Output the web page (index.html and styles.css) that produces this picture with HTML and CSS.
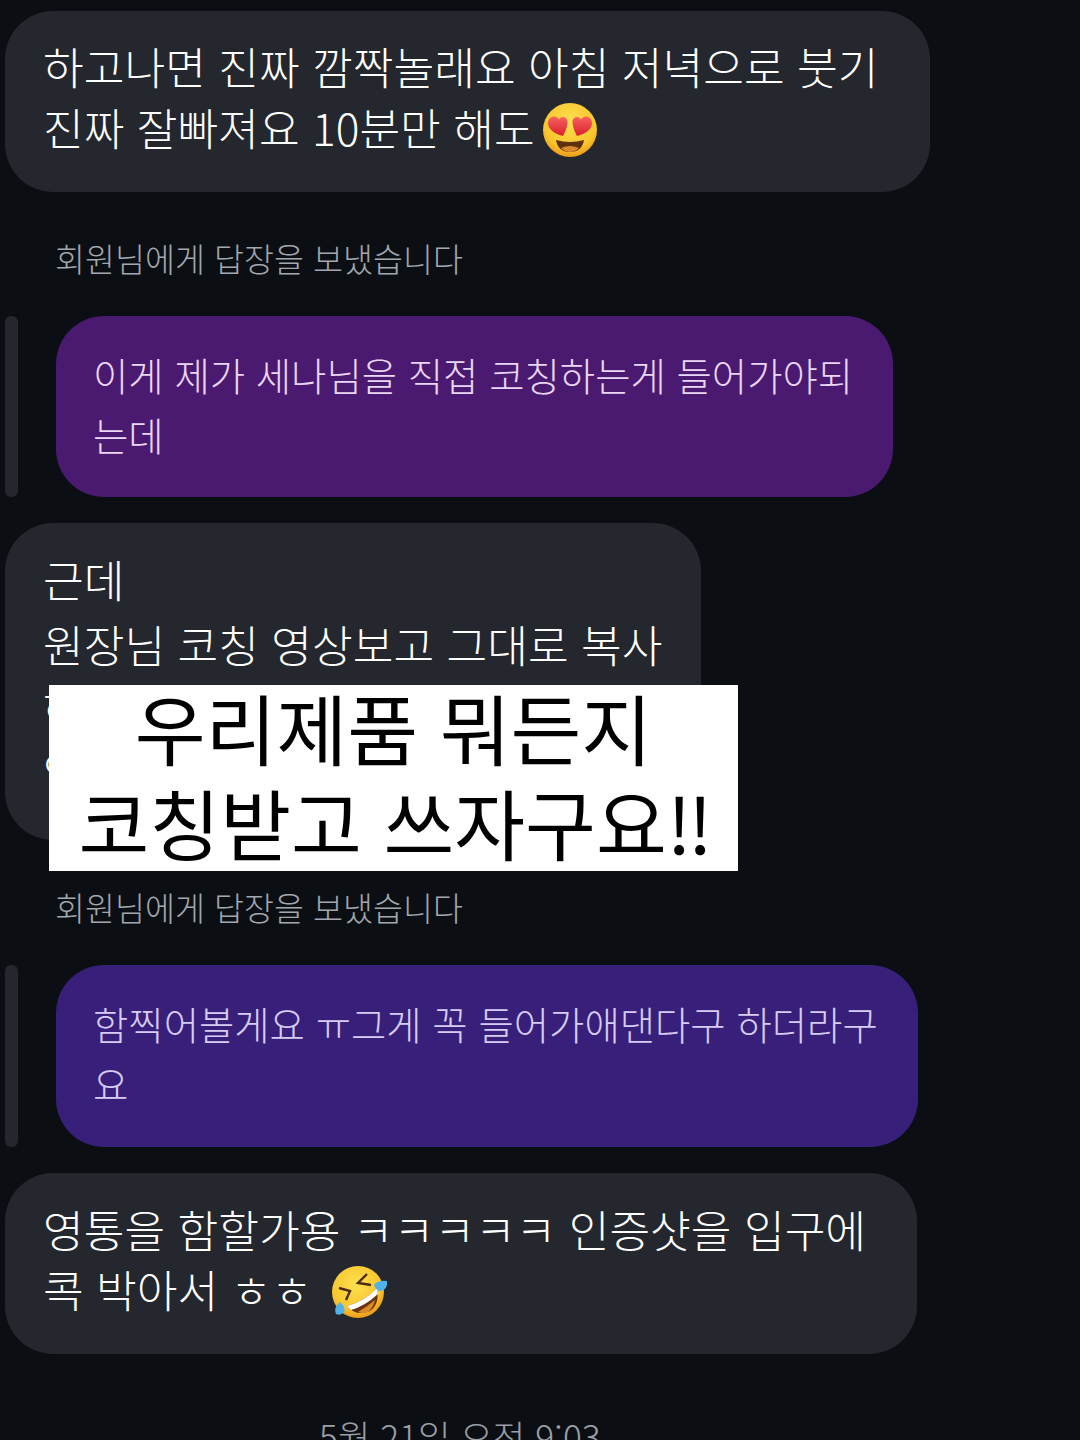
FILE: index.html
```html
<!DOCTYPE html>
<html lang="ko">
<head>
    <meta charset="UTF-8">
    <meta name="viewport" content="width=device-width, initial-scale=1.0">
    <title>메시지</title>
    <link rel="stylesheet" href="styles.css">
</head>
<body>

<div class="thread">
    <div class="bubble first">
        하고나면 진짜 깜짝놀래요 아침 저녁으로 붓기<br>
        진짜 잘빠져요 10분만 해도<svg class="emoji" viewBox="0 0 56 56">
            <defs>
                <radialGradient id="face-a" cx="0.5" cy="0.35" r="0.7">
                    <stop offset="0" stop-color="#fde04f"/>
                    <stop offset="0.7" stop-color="#f8c52c"/>
                    <stop offset="1" stop-color="#e98e17"/>
                </radialGradient>
                <linearGradient id="heart-a" x1="0" y1="0" x2="0" y2="1">
                    <stop offset="0" stop-color="#f8635f"/>
                    <stop offset="1" stop-color="#d81f2c"/>
                </linearGradient>
            </defs>
            <circle cx="28" cy="28" r="27" fill="url(#face-a)"/>
            <path d="M14 38 Q28 42 42 38 Q40 50 28 50 Q16 50 14 38Z" fill="#5e300e"/>
            <path d="M19 46 Q28 42 37 46 Q33 50 28 50 Q23 50 19 46Z" fill="#d98a2a"/>
            <path d="M21 34 C12 32 4 26 6.500 18.500 C8.500 13 15 13.500 17 17.500 C20 13 26 15 25.500 21 C25 26 23 30 21 34Z" fill="url(#heart-a)"/>
            <path d="M35 34 C44 32 52 26 49.500 18.500 C47.500 13 41 13.500 39 17.500 C36 13 30 15 30.500 21 C31 26 33 30 35 34Z" fill="url(#heart-a)"/>
        </svg>
    </div>

    <div class="reply-label">회원님에게 답장을 보냈습니다</div>

    <div class="reply-row">
        <div class="reply-bar"></div>
        <div class="bubble mine plum">
            이게 제가 세나님을 직접 코칭하는게 들어가야되<br>
            는데
        </div>
    </div>

    <div class="bubble coach-msg">
        <div class="short-line">근데</div>
        원장님 코칭 영상보고 그대로 복사<br>
        하<br>
        연
        <div class="caption">
            <div class="caption-text">우리제품 뭐든지<br>코칭받고 쓰자구요<span class="bangs">!!</span></div>
        </div>
    </div>

    <div class="reply-label second">회원님에게 답장을 보냈습니다</div>

    <div class="reply-row">
        <div class="reply-bar"></div>
        <div class="bubble mine indigo">
            함찍어볼게요 ㅠ그게 꼭 들어가애댄다구 하더라구<br>
            요
        </div>
    </div>

    <div class="bubble last">
        영통을 함할가용 ㅋㅋㅋㅋㅋ 인증샷을 입구에<br>
        콕 박아서 ㅎㅎ <svg class="emoji rofl" viewBox="0 0 60 60">
            <defs>
                <radialGradient id="face-b" cx="0.45" cy="0.35" r="0.7">
                    <stop offset="0" stop-color="#fde04f"/>
                    <stop offset="0.7" stop-color="#f8c52c"/>
                    <stop offset="1" stop-color="#e98e17"/>
                </radialGradient>
            </defs>
            <circle cx="30" cy="30" r="26" fill="url(#face-b)"/>
            <path d="M19 44 Q37 39 49 26 Q52 42 42 49 Q28 55 19 44Z" fill="#6b3410"/>
            <path d="M30 50 Q40 44 47 38 Q45 46 40 50 Q35 52 30 50Z" fill="#d98a2a"/>
            <path d="M19 44 Q37 39 49 26 L50 32 Q37 44 23 48Z" fill="#fff"/>
            <path d="M39 12 L30 21 L43 23" fill="none" stroke="#4d2a10" stroke-width="2.400"/>
            <path d="M11 26 L22 29 L18 38" fill="none" stroke="#4d2a10" stroke-width="2.400"/>
            <path d="M46 23 Q50 18 59 19 Q60 27 53 29 Q48 29 46 23Z" fill="#4fb3ea"/>
            <path d="M8 52 Q5 46 12 40 Q18 45 16 50 Q13 54 8 52Z" fill="#4fb3ea"/>
        </svg>
    </div>

    <div class="timestamp">5월 21일 오전 9:03</div>
</div>

</body>
</html>
```

FILE: styles.css
```css
html, body {
    margin: 0;
    height: 1440px;
    overflow: hidden;
    background-color: #0b0f13;
}
.thread {
    display: flex;
    flex-direction: column;
    align-items: flex-start;
    padding: 11px 0 0 5px;
    font-family: "Noto Sans CJK KR", "Noto Sans", sans-serif;
    font-weight: 300;
    color: #fff;
}
.bubble {
    background-color: #24272d;
    border-radius: 48px;
    box-sizing: border-box;
    font-size: 44.25px;
    line-height: 61px;
    white-space: nowrap;
}
.first {
    width: 925px;
    height: 181px;
    padding: 25px 0 0 38px;
}
.reply-label {
    margin: 50px 0 0 50px;
    height: 32px;
    font-size: 32.6px;
    line-height: 32px;
    color: #a3a7ae;
}
.reply-label.second {
    margin-top: 51px;
}
.reply-row {
    display: flex;
    gap: 38px;
    margin-top: 42px;
}
.reply-bar {
    width: 13px;
    border-radius: 6px;
    background-color: #24272d;
}
.mine {
    height: 181px;
    padding: 28px 0 0 37px;
    font-size: 38.4px;
    line-height: 60px;
}
.plum {
    width: 837px;
    background-color: #4a1a70;
    color: #ead6f5;
}
.indigo {
    width: 862px;
    height: 182px;
    background-color: #38207a;
    color: #d6ccf5;
}
.coach-msg {
    position: relative;
    width: 696px;
    height: 317px;
    margin-top: 26px;
    padding: 25px 0 0 38px;
    line-height: 63px;
}
.short-line {
    margin-bottom: 2px;
}
/* white caption pasted over the message */
.caption {
    position: absolute;
    left: 44px;
    top: 162px;
    width: 689px;
    height: 186px;
    background-color: #fff;
    color: #000;
    font-size: 77px;
    font-weight: 400;
    line-height: 95px;
    text-align: center;
}
.caption-text {
    margin-top: -6px;
}
.bangs {
    letter-spacing: -4px;
}
.last {
    width: 912px;
    height: 181px;
    margin-top: 26px;
    padding: 26px 0 0 38px;
    line-height: 60px;
}
.emoji {
    width: 56px;
    height: 56px;
    vertical-align: -12px;
    margin-left: 7px;
}
.rofl {
    width: 60px;
    height: 60px;
    vertical-align: -14px;
    margin-left: 4px;
}
.timestamp {
    margin: 62px 0 0 314px;
    font-size: 35.300px;
    line-height: 40px;
    color: #9b9fa6;
}
```
